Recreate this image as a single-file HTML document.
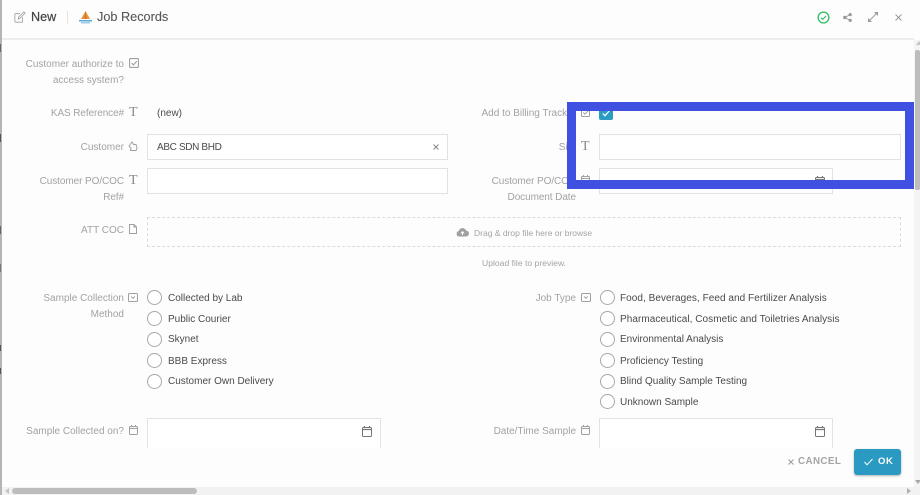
<!DOCTYPE html>
<html><head><meta charset="utf-8">
<style>
html,body{margin:0;padding:0;width:920px;height:495px;overflow:hidden;background:#fdfdfd;font-family:"Liberation Sans",sans-serif}
#w{position:absolute;left:0;top:0;width:920px;height:495px;overflow:hidden;filter:blur(.3px)}
.t{position:absolute;white-space:nowrap;font-size:10px;line-height:12px;color:#4a4a4a;margin-top:1px}
.l{position:absolute;white-space:nowrap;font-size:10px;line-height:15.5px;color:#a2a2a2;text-align:right;margin-top:1px}
.b{position:absolute;border:1px solid #e2e2e2;box-sizing:border-box;background:#fff}
.r{position:absolute;width:15px;height:15px;border:1px solid #a8a8a8;border-radius:50%;box-sizing:border-box;background:#fff}
svg{position:absolute;overflow:visible}
.i{fill:none;stroke:#a0a0a0;stroke-width:1}
.T{position:absolute;font-family:"Liberation Serif",serif;font-size:14px;line-height:14px;color:#8a8a8a;margin-top:1px}
</style></head><body><div id="w">
<!-- left edge -->
<div style="position:absolute;left:0;top:0;width:2px;height:495px;background:#b4b4b4"></div>
<div style="position:absolute;left:0;top:44px;width:1px;height:8px;background:#666"></div>
<div style="position:absolute;left:0;top:134px;width:1px;height:8px;background:#555"></div>
<div style="position:absolute;left:0;top:226px;width:1px;height:8px;background:#666"></div>
<div style="position:absolute;left:0;top:264px;width:1px;height:8px;background:#777"></div>
<div style="position:absolute;left:0;top:345px;width:1px;height:6px;background:#555"></div>
<div style="position:absolute;left:0;top:368px;width:1px;height:6px;background:#555"></div>
<!-- header -->
<svg style="left:14px;top:11px" width="12" height="12" viewBox="0 0 14 14"><path class="i" d="M10 7.5V12a1 1 0 0 1-1 1H2a1 1 0 0 1-1-1V4a1 1 0 0 1 1-1h5"/><path class="i" d="M5 9.5l.5-2.500L11.500 1 13 2.500 7 8.500z"/></svg>
<div class="t" style="left:31px;top:9px;font-size:12.600px;line-height:15px;color:#444;-webkit-text-stroke:.2px #444">New</div>
<div style="position:absolute;left:67px;top:11px;width:1px;height:13px;background:#e4e4e4"></div>
<svg style="left:79px;top:11px" width="13" height="13" viewBox="0 0 13 13"><path d="M6.500 0L11 8H2z" fill="#e9973a"/><path d="M6.500 0L8 8H5z" fill="#d9782a"/><rect x="0" y="9" width="13" height="1.500" fill="#5aa9d6"/><rect x="2" y="11" width="9" height="1.500" fill="#9fcbe6"/></svg>
<div class="t" style="left:97px;top:9px;font-size:12.700px;line-height:15px;color:#555;-webkit-text-stroke:.1px #555">Job Records</div>
<svg style="left:817px;top:11px" width="13" height="13" viewBox="0 0 13 13"><circle cx="6.500" cy="6.500" r="5.400" fill="none" stroke="#3cc06c" stroke-width="1.400"/><path d="M4 6.800l1.800 1.600L9 5" fill="none" stroke="#3cc06c" stroke-width="1.200"/></svg>
<svg style="left:843px;top:13px" width="9" height="9" viewBox="0 0 9 9"><circle cx="1.800" cy="4.500" r="1.700" fill="#9a9a9a"/><circle cx="7.200" cy="1.600" r="1.600" fill="#9a9a9a"/><circle cx="7.200" cy="7.400" r="1.600" fill="#9a9a9a"/><path d="M2 4.500L7 1.600M2 4.500L7 7.400" stroke="#9a9a9a"/></svg>
<svg style="left:868px;top:12px" width="10" height="10" viewBox="0 0 10 10"><path d="M6 0h4v4zM0 10V6l4 4z" fill="#9a9a9a"/><path d="M8 2L2 8" stroke="#9a9a9a"/></svg>
<svg style="left:895px;top:14px" width="7" height="7" viewBox="0 0 7 7"><path d="M.5.500l6 6M6.500.500l-6 6" stroke="#999" stroke-width="1"/></svg>
<div style="position:absolute;left:2px;top:38px;width:912px;height:2px;background:#ececec"></div>
<!-- row 1 -->
<div class="l" style="right:796px;top:56px">Customer authorize to<br>access system?</div>
<svg style="left:129px;top:58px" width="10" height="10" viewBox="0 0 9 9"><rect class="i" x=".5" y=".5" width="8" height="8" rx="1"/><path class="i" d="M2.300 4.500l1.700 1.700L7 2.800"/></svg>
<div class="l" style="right:796px;top:105px;letter-spacing:-.1px">KAS Reference#</div>
<div class="T" style="left:129px;top:105px">T</div>
<div class="t" style="left:157px;top:107px">(new)</div>
<div class="l" style="right:796px;top:139px">Customer</div>
<svg style="left:128px;top:141px" width="10" height="11" viewBox="0 0 10 11"><path class="i" d="M1 5l3-4 1.500 2.500H8l1 3.500-1 2.500H2.500L3 7z"/></svg>
<div class="b" style="left:147px;top:134px;width:301px;height:26px"></div>
<div class="t" style="left:157px;top:141px;letter-spacing:-.35px">ABC SDN BHD</div>
<svg style="left:433px;top:144px" width="6" height="6" viewBox="0 0 6 6"><path d="M.5.500l5 5M5.500.500l-5 5" stroke="#888"/></svg>
<div class="l" style="right:796px;top:173px;letter-spacing:-.08px">Customer PO/COC<br>Ref#</div>
<div class="T" style="left:129px;top:173px">T</div>
<div class="b" style="left:147px;top:168px;width:301px;height:26px"></div>
<div class="l" style="right:796px;top:222px">ATT COC</div>
<svg style="left:129px;top:224px" width="8" height="10" viewBox="0 0 8 10"><path class="i" d="M.5.500H5L7.500 3v6.500h-7zM5 .5V3h2.500"/></svg>
<div style="position:absolute;left:147px;top:217px;width:754px;height:30px;border:1px dashed #dcdcdc;box-sizing:border-box"></div>
<svg style="left:456px;top:227px" width="13" height="10" viewBox="0 0 13 10"><path d="M3 9.500A2.800 2.800 0 0 1 2.800 4 3.800 3.800 0 0 1 10 3.500 3 3 0 0 1 10 9.500z" fill="#a0a0a0"/><path d="M6.500 8V5M5 6.200l1.500-1.500L8 6.200" stroke="#fff" fill="none"/></svg>
<div class="t" style="left:474px;top:226px;font-size:8.500px;color:#a4a4a4">Drag &amp; drop file here or browse</div>
<div class="t" style="left:482px;top:256px;font-size:8.600px;color:#a4a4a4">Upload file to preview.</div>
<!-- radios left -->
<div class="l" style="right:796px;top:290px">Sample Collection<br>Method</div>
<svg style="left:128px;top:293px" width="10" height="9" viewBox="0 0 10 9"><rect class="i" x=".5" y=".5" width="9" height="8" rx="1"/><path class="i" d="M3.200 3.500L5 5.300l1.800-1.800"/></svg>
<div class="r" style="left:147px;top:290px"></div><div class="t" style="left:168px;top:292px">Collected by Lab</div>
<div class="r" style="left:147px;top:311px"></div><div class="t" style="left:168px;top:313px">Public Courier</div>
<div class="r" style="left:147px;top:332px"></div><div class="t" style="left:168px;top:333px">Skynet</div>
<div class="r" style="left:147px;top:353px"></div><div class="t" style="left:168px;top:355px">BBB Express</div>
<div class="r" style="left:147px;top:374px"></div><div class="t" style="left:168px;top:375px">Customer Own Delivery</div>
<!-- bottom left -->
<div class="l" style="right:796px;top:423px">Sample Collected on?</div>
<svg style="left:129px;top:425px" width="9" height="10" viewBox="0 0 9 10"><rect class="i" x=".5" y="1.500" width="8" height="8" rx="1"/><path d="M.5 3.500h8M2.500 0v2M6.500 0v2" stroke="#a0a0a0"/></svg>
<div class="b" style="left:147px;top:418px;width:234px;height:30px;border-bottom:0"></div>
<svg style="left:362px;top:426px" width="10" height="11" viewBox="0 0 10 11"><rect x=".5" y="1.500" width="9" height="9" rx="1" fill="none" stroke="#777"/><path d="M.5 3.500h9M2.500 0v2M7.500 0v2" stroke="#777" stroke-width="1.200"/></svg>
<!-- right column -->
<div class="l" style="right:344px;top:105px">Add to Billing Tracker</div>
<svg style="left:581px;top:108px" width="9" height="9" viewBox="0 0 9 9"><rect class="i" x=".5" y=".5" width="8" height="8" rx="1"/><path class="i" d="M2.300 4.500l1.700 1.700L7 2.800"/></svg>
<div style="position:absolute;left:599px;top:106px;width:14px;height:14px;background:#2b9dc4;border-radius:2px"></div>
<svg style="left:602px;top:110px" width="8" height="7" viewBox="0 0 8 7"><path d="M.8 3.500l2.200 2.200L7.200 1" fill="none" stroke="#fff" stroke-width="1.200"/></svg>
<div class="l" style="right:344px;top:139px">Site</div>
<div class="T" style="left:581px;top:139px">T</div>
<div class="b" style="left:599px;top:134px;width:302px;height:26px"></div>
<div class="l" style="right:344px;top:173px;letter-spacing:-.08px">Customer PO/COC<br>Document Date</div>
<svg style="left:581px;top:175px" width="9" height="10" viewBox="0 0 9 10"><rect class="i" x=".5" y="1.500" width="8" height="8" rx="1"/><path d="M.5 3.500h8M2.500 0v2M6.500 0v2" stroke="#a0a0a0"/></svg>
<div class="b" style="left:599px;top:168px;width:234px;height:26px"></div>
<svg style="left:815px;top:176px" width="10" height="11" viewBox="0 0 10 11"><rect x=".5" y="1.500" width="9" height="9" rx="1" fill="none" stroke="#777"/><path d="M.5 3.500h9M2.500 0v2M7.500 0v2" stroke="#777" stroke-width="1.200"/></svg>
<div class="l" style="right:344px;top:290px">Job Type</div>
<svg style="left:581px;top:293px" width="10" height="9" viewBox="0 0 10 9"><rect class="i" x=".5" y=".5" width="9" height="8" rx="1"/><path class="i" d="M3.200 3.500L5 5.300l1.800-1.800"/></svg>
<div class="r" style="left:600px;top:290px"></div><div class="t" style="left:620px;top:292px;letter-spacing:.05px">Food, Beverages, Feed and Fertilizer Analysis</div>
<div class="r" style="left:600px;top:311px"></div><div class="t" style="left:620px;top:313px;letter-spacing:.05px">Pharmaceutical, Cosmetic and Toiletries Analysis</div>
<div class="r" style="left:600px;top:332px"></div><div class="t" style="left:620px;top:333px">Environmental Analysis</div>
<div class="r" style="left:600px;top:353px"></div><div class="t" style="left:620px;top:355px">Proficiency Testing</div>
<div class="r" style="left:600px;top:374px"></div><div class="t" style="left:620px;top:375px">Blind Quality Sample Testing</div>
<div class="r" style="left:600px;top:394px"></div><div class="t" style="left:620px;top:396px">Unknown Sample</div>
<div class="l" style="right:344px;top:423px">Date/Time Sample</div>
<svg style="left:581px;top:425px" width="9" height="10" viewBox="0 0 9 10"><rect class="i" x=".5" y="1.500" width="8" height="8" rx="1"/><path d="M.5 3.500h8M2.500 0v2M6.500 0v2" stroke="#a0a0a0"/></svg>
<div class="b" style="left:599px;top:418px;width:234px;height:30px;border-bottom:0"></div>
<svg style="left:815px;top:426px" width="10" height="11" viewBox="0 0 10 11"><rect x=".5" y="1.500" width="9" height="9" rx="1" fill="none" stroke="#777"/><path d="M.5 3.500h9M2.500 0v2M7.500 0v2" stroke="#777" stroke-width="1.200"/></svg>
<!-- footer -->
<svg style="left:788px;top:459px" width="6" height="6" viewBox="0 0 6 6"><path d="M.5.500l5 5M5.500.500l-5 5" stroke="#a0a0a0" stroke-width="1.100"/></svg>
<div class="t" style="left:798px;top:455px;font-size:9.800px;font-weight:bold;letter-spacing:.4px;color:#a4a4a4">CANCEL</div>
<div style="position:absolute;left:854px;top:449px;width:47px;height:26px;background:#2b9ac2;border-radius:3px;box-shadow:0 1px 2px rgba(0,0,0,.3)"></div>
<svg style="left:864px;top:458px" width="9" height="8" viewBox="0 0 9 8"><path d="M.5 4l2.500 2.800L8.500 1" fill="none" stroke="#fff" stroke-width="1"/></svg>
<div class="t" style="left:878px;top:455px;font-size:9.500px;font-weight:bold;letter-spacing:.6px;color:#fff">OK</div>
<!-- scrollbars -->
<div style="position:absolute;left:914px;top:40px;width:6px;height:447px;background:#f4f4f4"></div>
<div style="position:absolute;left:915px;top:50px;width:5px;height:140px;background:#bdbdbd;border-radius:2px"></div>
<div style="position:absolute;left:916px;top:41px;border:3px solid transparent;border-bottom:4px solid #c4c4c4;border-top:0"></div>
<div style="position:absolute;left:915px;top:480px;border:3px solid transparent;border-top:4px solid #a8a8a8;border-bottom:0"></div>
<div style="position:absolute;left:2px;top:487px;width:918px;height:8px;background:#f2f2f2"></div>
<div style="position:absolute;left:12px;top:488px;width:185px;height:6px;background:#bdbdbd;border-radius:3px"></div>
<div style="position:absolute;left:5px;top:488px;border:3px solid transparent;border-right:4px solid #c4c4c4;border-left:0"></div>
<div style="position:absolute;left:907px;top:488px;border:3px solid transparent;border-left:4px solid #b0b0b0;border-right:0"></div>
<!-- highlight -->
<div style="position:absolute;left:567px;top:102px;width:347px;height:87px;border:9px solid #4050e0;box-sizing:border-box"></div>
</div></body></html>
